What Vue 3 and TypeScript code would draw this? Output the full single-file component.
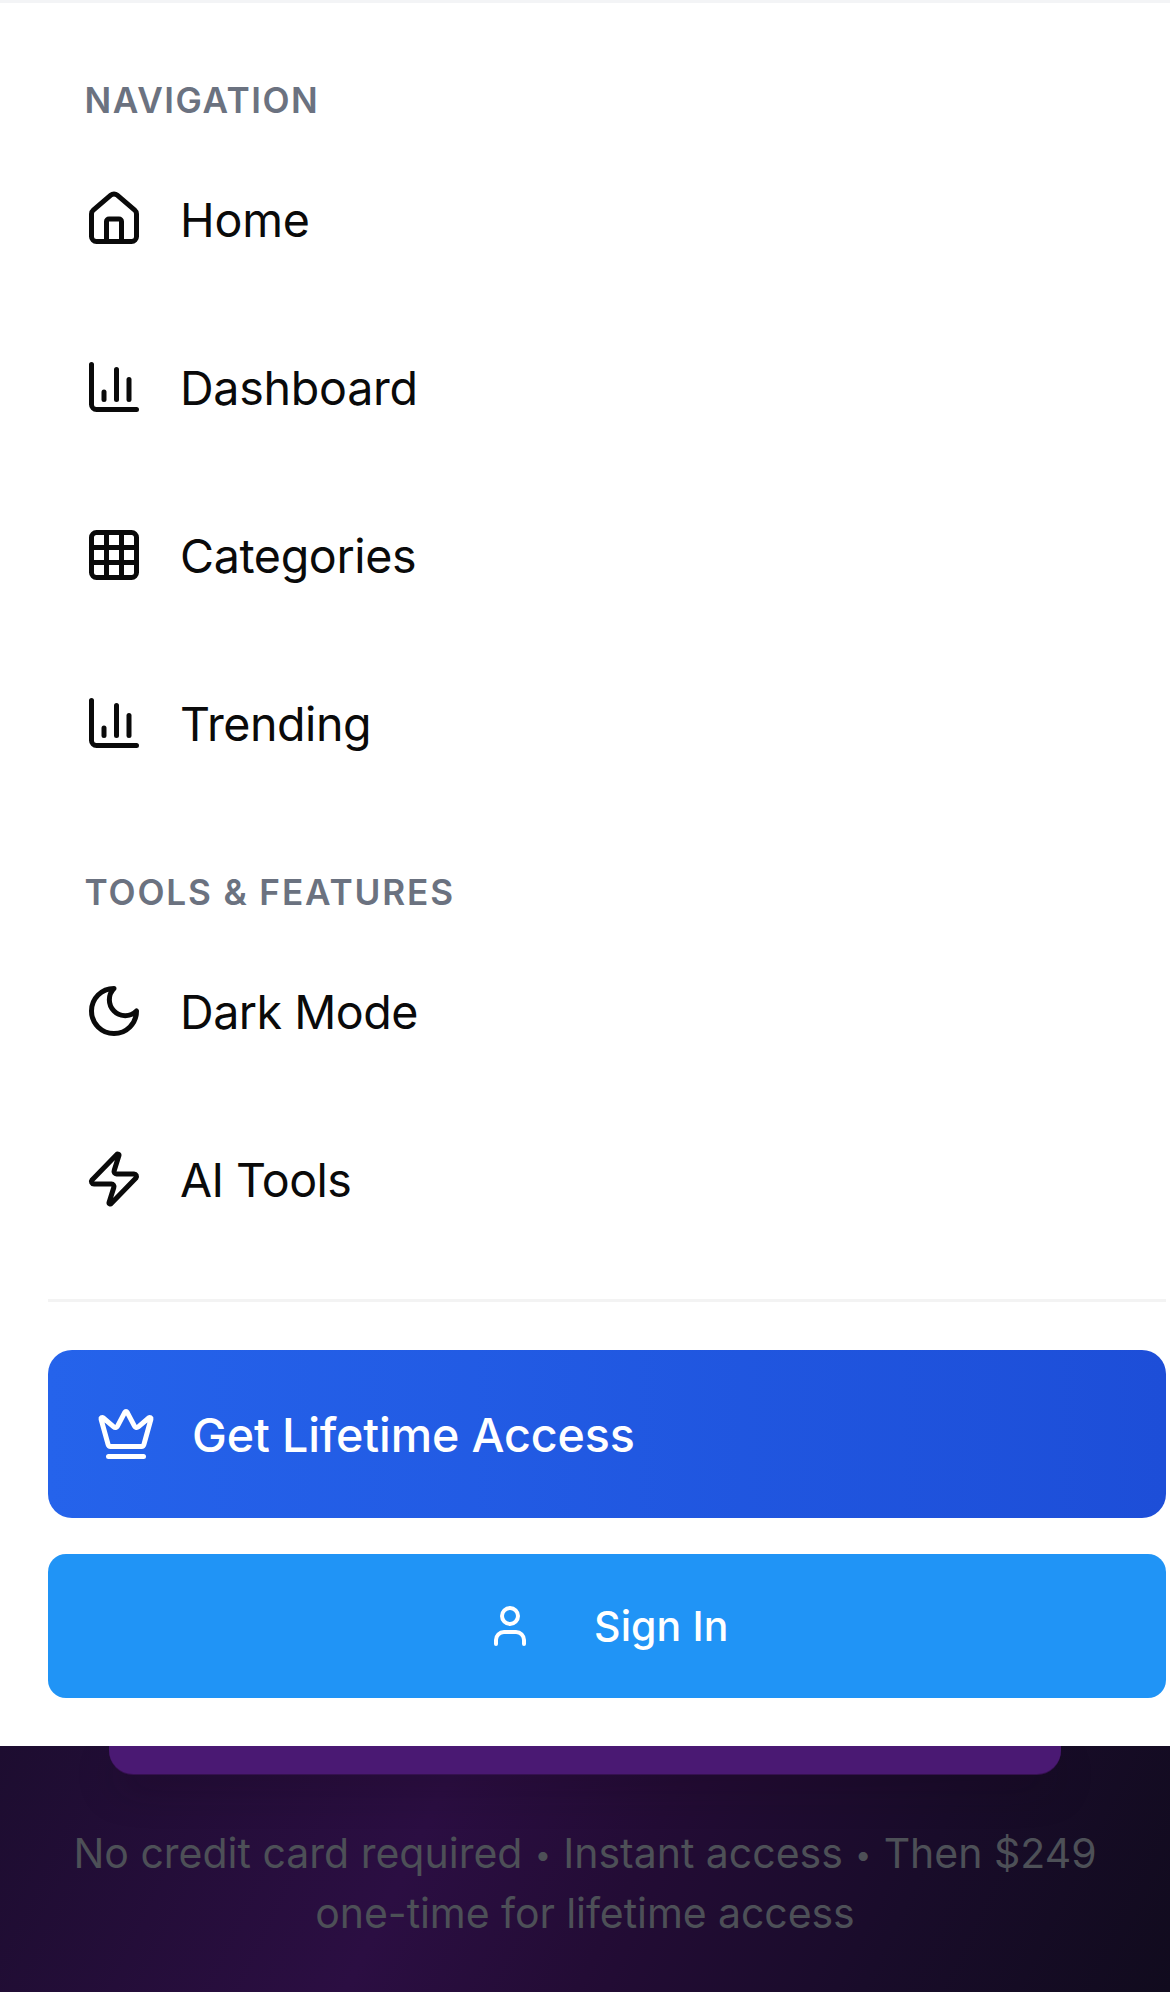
<script setup lang="ts">
interface Item {
  id: string
  label: string
  icon: string[]
}
interface Section {
  id: string
  title: string
  items: Item[]
}

const chart = ['M3 3v16a2 2 0 0 0 2 2h16', 'M18 17V9', 'M13 17V5', 'M8 17v-3']

const sections: Section[] = [
  {
    id: 'navigation',
    title: 'Navigation',
    items: [
      {
        id: 'home',
        label: 'Home',
        icon: [
          'M15 21v-8a1 1 0 0 0-1-1h-4a1 1 0 0 0-1 1v8',
          'M3 10a2 2 0 0 1 .709-1.528l7-5.999a2 2 0 0 1 2.582 0l7 5.999A2 2 0 0 1 21 10v9a2 2 0 0 1-2 2H5a2 2 0 0 1-2-2z',
        ],
      },
      { id: 'dashboard', label: 'Dashboard', icon: chart },
      {
        id: 'categories',
        label: 'Categories',
        icon: [
          'M5 3h14a2 2 0 0 1 2 2v14a2 2 0 0 1-2 2H5a2 2 0 0 1-2-2V5a2 2 0 0 1 2-2z',
          'M3 9h18',
          'M3 15h18',
          'M9 3v18',
          'M15 3v18',
        ],
      },
      { id: 'trending', label: 'Trending', icon: chart },
    ],
  },
  {
    id: 'tools',
    title: 'Tools & Features',
    items: [
      { id: 'dark', label: 'Dark Mode', icon: ['M12 3a6 6 0 0 0 9 9 9 9 0 1 1-9-9Z'] },
      {
        id: 'ai',
        label: 'AI Tools',
        icon: [
          'M4 14a1 1 0 0 1-.78-1.63l9.9-10.2a.5.5 0 0 1 .86.46l-1.92 6.02A1 1 0 0 0 13 10h7a1 1 0 0 1 .78 1.63l-9.9 10.2a.5.5 0 0 1-.86-.46l1.92-6.02A1 1 0 0 0 11 14z',
        ],
      },
    ],
  },
]
</script>

<template>
  <div class="page">
    <div class="menu">
      <nav>
        <section v-for="section in sections" :key="section.id" :class="section.id">
          <h3>{{ section.title }}</h3>
          <a v-for="item in section.items" :key="item.id" class="item">
            <svg class="icon" viewBox="0 0 24 24">
              <path v-for="(d, i) in item.icon" :key="i" :d="d" />
            </svg>
            <span :class="['label', item.id]">{{ item.label }}</span>
          </a>
        </section>
      </nav>
      <div class="actions">
        <button class="lifetime">
          <svg class="icon" viewBox="0 0 24 24">
            <path
              d="M11.562 3.266a.5.5 0 0 1 .876 0L15.39 8.87a1 1 0 0 0 1.516.294L21.183 5.5a.5.5 0 0 1 .798.519l-2.834 10.246a1 1 0 0 1-.956.734H5.81a1 1 0 0 1-.957-.734L2.02 6.02a.5.5 0 0 1 .798-.519l4.276 3.664a1 1 0 0 0 1.516-.294z"
            />
            <path d="M5 21h14" />
          </svg>
          <span class="label">Get Lifetime Access</span>
        </button>
        <button class="signin">
          <svg class="icon" viewBox="0 0 24 24">
            <path d="M19 21v-2a4 4 0 0 0-4-4H9a4 4 0 0 0-4 4v2" />
            <circle cx="12" cy="7" r="4" />
          </svg>
          <span>Sign In</span>
        </button>
      </div>
    </div>
    <div class="hero">
      <div class="cta"></div>
      <p>
        <span>No credit card required <i>•</i> Instant access <i>•</i> Then $249</span><br />
        <span class="line2">one-time for lifetime access</span>
      </p>
    </div>
  </div>
</template>

<style>
body {
  margin: 0;
}
</style>

<style scoped>
.page {
  width: 1170px;
  height: 1992px;
  display: flex;
  flex-direction: column;
  overflow: hidden;
  font-family: Inter, 'Liberation Sans', sans-serif;
}
.menu {
  position: relative;
  z-index: 1;
  box-sizing: border-box;
  height: 1746px;
  flex: none;
  background: #fff;
  border-top: 3px solid #f3f4f6;
  padding: 61px 4.5px 0 48px;
  color: #0a0a0a;
}
.navigation {
  padding-bottom: 49px;
}
.tools {
  padding-bottom: 36px;
}
h3 {
  margin: 0;
  box-sizing: border-box;
  height: 71px;
  padding: 1px 0 0 36.6px;
  font-size: 35.2px;
  line-height: 71px;
  font-weight: 600;
  letter-spacing: 1.5px;
  text-transform: uppercase;
  color: #6b7280;
}
.tools h3 {
  letter-spacing: 1.84px;
}
.item {
  display: flex;
  align-items: center;
  gap: 36px;
  height: 168px;
  padding-left: 36px;
  font-size: 46.6px;
}
.label {
  padding-top: 2px;
}
.home {
  letter-spacing: -0.2px;
}
.dashboard {
  letter-spacing: -0.28px;
}
.categories {
  letter-spacing: -0.38px;
}
.trending {
  letter-spacing: -0.47px;
}
.dark {
  letter-spacing: -0.5px;
}
.ai {
  letter-spacing: -0.6px;
}
.icon {
  width: 60px;
  height: 60px;
  flex: none;
  fill: none;
  stroke: currentColor;
  stroke-width: 2;
  stroke-linecap: round;
  stroke-linejoin: round;
}
span {
  white-space: nowrap;
}
.actions {
  border-top: 3px solid #f3f3f3;
  padding-top: 48px;
  display: flex;
  flex-direction: column;
  gap: 36px;
}
button {
  border: 0;
  margin: 0;
  display: flex;
  align-items: center;
  color: #fff;
  font-family: inherit;
  font-weight: 500;
}
.lifetime {
  height: 168px;
  padding: 0 48px;
  gap: 36px;
  border-radius: 24px;
  background: linear-gradient(to right, #2563eb, #1d4ed8);
  font-size: 46.6px;
  letter-spacing: -0.13px;
}
.signin {
  height: 144px;
  padding: 0 0 0 1px;
  justify-content: center;
  gap: 60px;
  border-radius: 18px;
  background: #2094f6;
  font-size: 41px;
  letter-spacing: 0.1px;
}
.signin .icon {
  width: 48px;
  height: 48px;
}
.hero {
  flex: 1;
  background: linear-gradient(116deg, #1d0d30 0%, #2b0e42 36%, #230c35 54%, #190c2a 76%, #110b1e 100%);
}
.cta {
  height: 28px;
  margin: 0 109px;
  border-radius: 0 0 24px 24px;
  background: #4a1973;
  box-shadow: 0 1px 0 #35114f, 0 16px 40px -6px rgba(20, 6, 20, 0.4);
}
p {
  margin: 49px 0 0;
  text-align: center;
  font-size: 41px;
  line-height: 60px;
  color: #4d5057;
}
i {
  margin: 0 0.7px;
  font-style: normal;
  font-size: 29px;
  line-height: 0;
  vertical-align: 3px;
}
.line2 {
  letter-spacing: -0.07px;
}
</style>
